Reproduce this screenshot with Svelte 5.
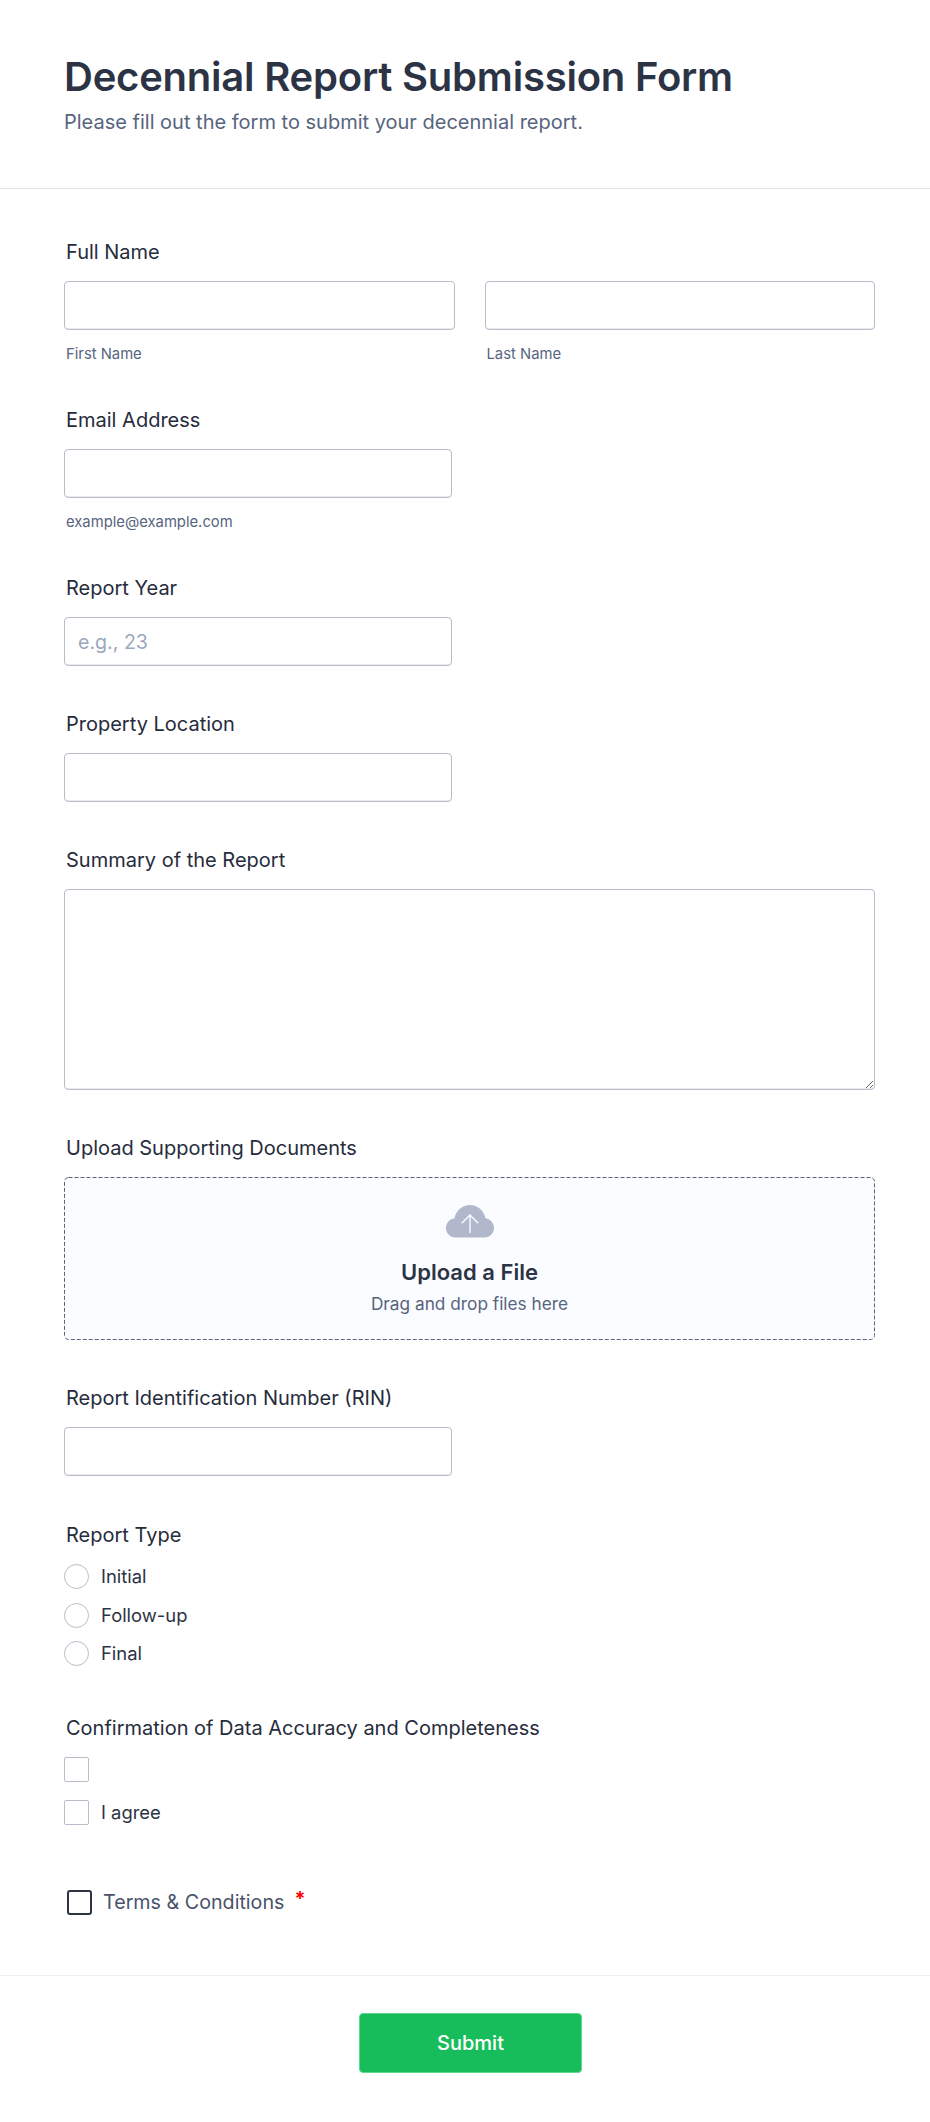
<script>
  const reportTypes = ["Initial", "Follow-up", "Final"];
</script>

<div class="page">
  <header class="head">
    <h1>Decennial Report Submission Form</h1>
    <p>Please fill out the form to submit your decennial report.</p>
  </header>

  <form class="body" onsubmit={(e) => e.preventDefault()}>
    <div class="field">
      <div class="label">Full Name</div>
      <div class="name-row">
        <div class="name-col">
          <input type="text" aria-label="First Name" />
          <div class="sub">First Name</div>
        </div>
        <div class="name-col">
          <input type="text" aria-label="Last Name" />
          <div class="sub">Last Name</div>
        </div>
      </div>
    </div>

    <div class="field">
      <div class="label">Email Address</div>
      <input class="half" type="email" aria-label="Email Address" />
      <div class="sub">example@example.com</div>
    </div>

    <div class="field">
      <div class="label">Report Year</div>
      <input class="half" type="text" placeholder="e.g., 23" aria-label="Report Year" />
    </div>

    <div class="field">
      <div class="label">Property Location</div>
      <input class="half" type="text" aria-label="Property Location" />
    </div>

    <div class="field">
      <div class="label">Summary of the Report</div>
      <textarea aria-label="Summary of the Report"></textarea>
    </div>

    <div class="field">
      <div class="label">Upload Supporting Documents</div>
      <div class="upload">
        <svg class="dashes" width="811" height="163" aria-hidden="true">
          <rect x="0.5" y="0.5" width="810" height="162" rx="4" fill="none" stroke="#57647e" stroke-dasharray="4 2" />
        </svg>
        <svg class="cloud" width="48" height="33" viewBox="0 0 48 33" aria-hidden="true">
          <path d="M9.500 32.500C4.300 32.500 0 28.300 0 23 0 18 3.700 13.800 8.500 13.200 10 5.600 16.300 0 24 0s14 5.600 15.500 13.200C44.300 13.800 48 18 48 23c0 5.300-4.300 9.500-9.500 9.500H9.500Z" fill="#b1b8cb" />
          <path d="M24 28V10M15.800 18.200 24 10l8.200 8.200" fill="none" stroke="#fbfcff" stroke-width="1.400" />
        </svg>
        <div class="upload-title">Upload a File</div>
        <div class="upload-hint">Drag and drop files here</div>
      </div>
    </div>

    <div class="field rin-field">
      <div class="label">Report Identification Number (RIN)</div>
      <input class="half" type="text" aria-label="Report Identification Number" />
    </div>

    <div class="field type-field">
      <div class="label">Report Type</div>
      <div class="options">
        {#each reportTypes as t}
          <label class="option">
            <span class="radio"></span>
            <span>{t}</span>
          </label>
        {/each}
      </div>
    </div>

    <div class="field confirm-field">
      <div class="label">Confirmation of Data Accuracy and Completeness</div>
      <div class="checks">
        <label class="option"><span class="box"></span></label>
        <label class="option"><span class="box"></span><span>I agree</span></label>
      </div>
    </div>

    <label class="terms">
      <span class="terms-box"></span>
      <span>Terms &amp; Conditions</span>
      <span class="req">*</span>
    </label>
  </form>

  <footer class="foot">
    <button type="button" class="submit">Submit</button>
  </footer>
</div>

<style>
  :global(body) {
    background: #fff;
  }
  .page {
    width: 930px;
    font-family: Inter, "Liberation Sans", sans-serif;
    color: #2c3345;
  }
  .head {
    height: 189px;
    box-sizing: border-box;
    padding: 52px 64px 0;
    border-bottom: 1px solid #dfe1e9;
  }
  h1 {
    margin: 0;
    font-size: 40px;
    line-height: 50px;
    font-weight: 600;
    letter-spacing: -0.22px;
    color: #2c3345;
  }
  .head p {
    margin: 5px 0 0;
    font-size: 20px;
    line-height: 30px;
    color: #57647e;
  }
  .body {
    padding: 50px 55px 60px 64px;
  }
  .field {
    margin-bottom: 45px;
  }
  .rin-field {
    margin-bottom: 46px;
  }
  .type-field {
    margin-bottom: 49px;
  }
  .confirm-field {
    margin-bottom: 65px;
  }
  .label {
    font-size: 20px;
    line-height: 24px;
    font-weight: 400;
    color: #262c3c;
    padding: 1px 0 0 2px;
    margin-bottom: 17px;
  }
  input,
  textarea {
    display: block;
    box-sizing: border-box;
    width: 100%;
    height: 49px;
    border: 1px solid #b8bdc9;
    border-radius: 4px;
    box-shadow: inset 0 -1px 0 rgba(184, 189, 201, 0.3);
    background: #fff;
    padding: 0 13px;
    font: 19.6px Inter, sans-serif;
    color: #2c3345;
    outline: none;
  }
  input::placeholder {
    color: #9aa8bd;
    opacity: 1;
  }
  input.half {
    width: 388px;
  }
  textarea {
    height: 201px;
    resize: vertical;
  }
  .name-row {
    display: flex;
    gap: 30px;
  }
  .name-col {
    flex: 1;
  }
  .sub {
    font-size: 14.8px;
    line-height: 18px;
    color: #57647e;
    padding: 1px 0 0 2px;
    margin: 14px 0 -1px;
  }
  .upload {
    position: relative;
    height: 163px;
    box-sizing: border-box;
    border-radius: 4px;
    background: #fbfcff;
    display: flex;
    flex-direction: column;
    align-items: center;
    padding-top: 28px;
  }
  .dashes {
    position: absolute;
    top: 0;
    left: 0;
  }
  .cloud {
    display: block;
  }
  .upload-title {
    margin-top: 19px;
    font-size: 22px;
    line-height: 30px;
    font-weight: 600;
  }
  .upload-hint {
    margin-top: 3px;
    font-size: 17.25px;
    line-height: 28px;
    color: #57647e;
  }
  .options {
    display: flex;
    flex-direction: column;
    gap: 13.5px;
  }
  .checks {
    display: flex;
    flex-direction: column;
    gap: 18px;
  }
  .option {
    display: flex;
    align-items: center;
    gap: 12px;
    font-size: 18.4px;
    line-height: 25px;
    min-height: 25px;
  }
  .radio,
  .box {
    width: 25px;
    height: 25px;
    box-sizing: border-box;
    border: 1px solid #b8bdc9;
    border-radius: 50%;
    flex: none;
  }
  .box {
    border-radius: 2px;
  }
  .terms {
    display: flex;
    align-items: center;
    gap: 11px;
    font-size: 19.7px;
    line-height: 25px;
    color: #495369;
    padding-left: 3px;
  }
  .terms-box {
    width: 25px;
    height: 25px;
    box-sizing: border-box;
    border: 2px solid #2c3345;
    border-radius: 3px;
  }
  .req {
    color: #f00;
    font-weight: 700;
    margin-left: -1px;
    position: relative;
    top: -3px;
  }
  .foot {
    height: 146px;
    box-sizing: border-box;
    border-top: 1px solid #eceef4;
    display: flex;
    justify-content: center;
    padding: 37px 0 0 11px;
  }
  .submit {
    width: 223px;
    height: 60px;
    border: 1px solid #5fd68f;
    border-radius: 4px;
    background: #18bd5b;
    color: #fff;
    font: 500 20px Inter, sans-serif;
  }
</style>
